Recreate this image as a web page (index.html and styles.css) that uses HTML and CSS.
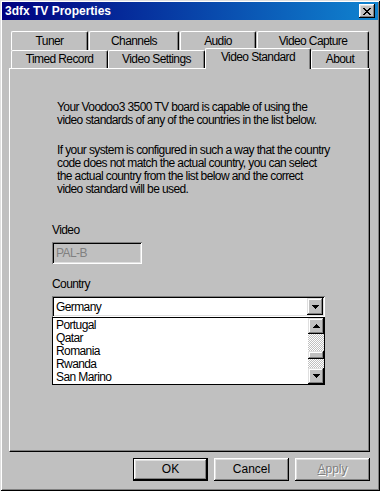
FILE: index.html
```html
<!DOCTYPE html>
<html lang="en">
<head>
  <meta charset="UTF-8" />
  <title>3dfx TV Properties</title>
  <link rel="stylesheet" href="styles.css">
</head>
<body>

  <div class="window">
    <!-- Title bar -->
    <div class="titlebar">
      <span class="title">3dfx TV Properties</span>
      <button class="close-btn">
        <svg width="8" height="7" viewBox="0 0 8 7" shape-rendering="crispEdges">
          <path d="M0 0h2v1h-2zM1 1h2v1h-2zM2 2h4v1h-4zM3 3h2v1h-2zM2 4h4v1h-4zM1 5h2v1h-2zM0 6h2v1h-2zM6 0h2v1h-2zM5 1h2v1h-2zM5 5h2v1h-2zM6 6h2v1h-2z" fill="#000"/>
        </svg>
      </button>
    </div>

    <div class="content">
      <!-- Tabs -->
      <div class="tabs">
        <div class="tab-row back">
          <div class="tab w-tuner">Tuner</div>
          <div class="tab w-channels">Channels</div>
          <div class="tab w-audio">Audio</div>
          <div class="tab w-capture">Video Capture</div>
        </div>
        <div class="tab-row front">
          <div class="tab w-timed">Timed Record</div>
          <div class="tab w-settings">Video Settings</div>
          <div class="tab w-standard active">Video Standard</div>
          <div class="tab w-about">About</div>
        </div>
      </div>

      <!-- Page -->
      <div class="panel">
        <p class="intro">Your Voodoo3 3500 TV board is capable of using the<br>video standards of any of the countries in the list below.</p>
        <p class="intro second">If your system is configured in such a way that the country<br>code does not match the actual country, you can select<br>the actual country from the list below and the correct<br>video standard will be used.</p>

        <div class="field-label video-label">Video</div>
        <div class="edit disabled">PAL-B</div>

        <div class="field-label country-label">Country</div>
        <div class="combo">
          <span class="combo-value">Germany</span>
          <span class="scroll-btn">
            <svg width="7" height="4" viewBox="0 0 7 4" shape-rendering="crispEdges"><path d="M0 0h7v1h-7zM1 1h5v1h-5zM2 2h3v1h-3zM3 3h1v1h-1z" fill="#000"/></svg>
          </span>
        </div>
        <div class="dropdown">
          <ul class="options">
            <li>Portugal</li>
            <li>Qatar</li>
            <li>Romania</li>
            <li>Rwanda</li>
            <li>San Marino</li>
          </ul>
          <div class="scrollbar">
            <span class="scroll-btn">
              <svg width="7" height="4" viewBox="0 0 7 4" shape-rendering="crispEdges"><path d="M3 0h1v1h-1zM2 1h3v1h-3zM1 2h5v1h-5zM0 3h7v1h-7z" fill="#000"/></svg>
            </span>
            <div class="track">
              <div class="thumb"></div>
            </div>
            <span class="scroll-btn">
              <svg width="7" height="4" viewBox="0 0 7 4" shape-rendering="crispEdges"><path d="M0 0h7v1h-7zM1 1h5v1h-5zM2 2h3v1h-3zM3 3h1v1h-1z" fill="#000"/></svg>
            </span>
          </div>
        </div>
      </div>

      <!-- Dialog buttons -->
      <div class="actions">
        <button class="btn default">OK</button>
        <button class="btn">Cancel</button>
        <button class="btn disabled"><u>A</u>pply</button>
      </div>
    </div>
  </div>

</body>
</html>
```

FILE: styles.css
```css
/* Reset */
* {
  margin: 0;
  padding: 0;
  box-sizing: border-box;
}

body {
  background: #c0c0c0;
  color: #000;
  font-family: "Liberation Sans", Arial, sans-serif;
  font-size: 12px;
  line-height: 13px;
  letter-spacing: -0.6px;
}

/* Window frame */
.window {
  width: 380px;
  height: 491px;
  padding: 2px;
  background: #c0c0c0;
  display: flex;
  flex-direction: column;
  box-shadow: inset 1px 1px #dfdfdf, inset -1px -1px #000, inset 2px 2px #fff, inset -2px -2px #808080;
}

.titlebar {
  height: 18px;
  display: flex;
  align-items: center;
  justify-content: space-between;
  padding: 0 3px;
  background: linear-gradient(to right, #000080, #1084d0);
  color: #fff;
  font: bold 12px "Liberation Sans", sans-serif;
  letter-spacing: 0;
}

.close-btn {
  width: 16px;
  height: 14px;
  border: none;
  background: #c0c0c0;
  display: flex;
  align-items: center;
  justify-content: center;
  box-shadow: inset -1px -1px #000, inset 1px 1px #fff, inset -2px -2px #808080, inset 2px 2px #dfdfdf;
}

.content {
  flex: 1;
  display: flex;
  flex-direction: column;
  padding: 11px 8px 0 7px;
}

/* Tabs */
.tab-row {
  display: flex;
  padding-left: 2px;
}

.tab-row.back {
  height: 19px;
}

.tab-row.front {
  height: 18px;
}

.tab {
  height: 100%;
  display: flex;
  align-items: center;
  justify-content: center;
  background: #c0c0c0;
  border-top: 1px solid #fff;
  border-left: 1px solid #fff;
  border-right: 1px solid #000;
  border-radius: 2px 2px 0 0;
  box-shadow: inset -1px 0 #808080;
}

.tab-row.back .tab {
  margin-right: 1px;
}

.w-tuner { width: 77px; }
.w-channels { width: 90px; }
.w-audio { width: 76px; }
.w-capture { width: 112px; }
.w-timed { width: 97px; }
.w-settings { width: 97px; }
.w-standard { width: 106px; }
.w-about { width: 58px; }

.tab.active {
  position: relative;
  z-index: 1;
  height: 21px;
  margin-top: -2px;
  padding-bottom: 3px;
}

/* Property page */
.panel {
  height: 384px;
  display: flex;
  flex-direction: column;
  align-items: flex-start;
  padding-left: 42px;
  border-top: 1px solid #fff;
  border-left: 1px solid #fff;
  border-right: 1px solid #000;
  border-bottom: 1px solid #000;
  box-shadow: inset -1px -1px #808080;
}

.intro {
  margin-top: 32px;
  padding-left: 5px;
  white-space: nowrap;
}

.intro.second {
  margin-top: 17px;
}

.field-label {
  margin-top: 28px;
}

.country-label {
  margin-top: 14px;
}

.edit {
  width: 90px;
  height: 22px;
  margin-top: 5px;
  padding: 5px 0 0 4px;
  box-shadow: inset 1px 1px #808080, inset -1px -1px #fff, inset 2px 2px #000, inset -2px -2px #dfdfdf;
}

.edit.disabled {
  background: #c0c0c0;
  color: #808080;
}

.combo {
  width: 273px;
  height: 21px;
  margin-top: 5px;
  display: flex;
  align-items: center;
  justify-content: space-between;
  padding: 2px 2px 2px 4px;
  background: #fff;
  box-shadow: inset 1px 1px #808080, inset -1px -1px #fff, inset 2px 2px #000, inset -2px -2px #dfdfdf;
}

.combo-value {
  padding-top: 1px;
}

.scroll-btn {
  width: 16px;
  height: 16px;
  flex-shrink: 0;
  display: flex;
  align-items: center;
  justify-content: center;
  background: #c0c0c0;
  box-shadow: inset -1px -1px #000, inset 1px 1px #dfdfdf, inset -2px -2px #808080, inset 2px 2px #fff;
}

.combo .scroll-btn {
  height: 17px;
}

/* Open list */
.dropdown {
  width: 273px;
  height: 68px;
  display: flex;
  border: 1px solid #000;
  background: #fff;
}

.options {
  flex: 1;
  list-style: none;
  padding: 1px 0 0 3px;
}

.options li {
  height: 13px;
}

.scrollbar {
  width: 16px;
  display: flex;
  flex-direction: column;
}

.track {
  flex: 1;
  padding-top: 17px;
  background: repeating-conic-gradient(#c0c0c0 0 25%, #fff 0 50%) 0 0 / 2px 2px;
}

.thumb {
  height: 8px;
  background: #c0c0c0;
  box-shadow: inset -1px -1px #000, inset 1px 1px #dfdfdf, inset -2px -2px #808080, inset 2px 2px #fff;
}

/* Dialog buttons */
.actions {
  display: flex;
  justify-content: flex-end;
  gap: 6px;
  margin-top: 6px;
}

.btn {
  width: 75px;
  height: 23px;
  border: none;
  background: #c0c0c0;
  font: inherit;
  color: #000;
  box-shadow: inset -1px -1px #000, inset 1px 1px #fff, inset -2px -2px #808080, inset 2px 2px #dfdfdf;
}

.btn.default {
  box-shadow: inset 0 0 0 1px #000, inset -2px -2px #000, inset 2px 2px #fff, inset -3px -3px #808080, inset 3px 3px #dfdfdf;
}

.btn.disabled {
  color: #808080;
  text-shadow: 1px 1px #fff;
}
```
